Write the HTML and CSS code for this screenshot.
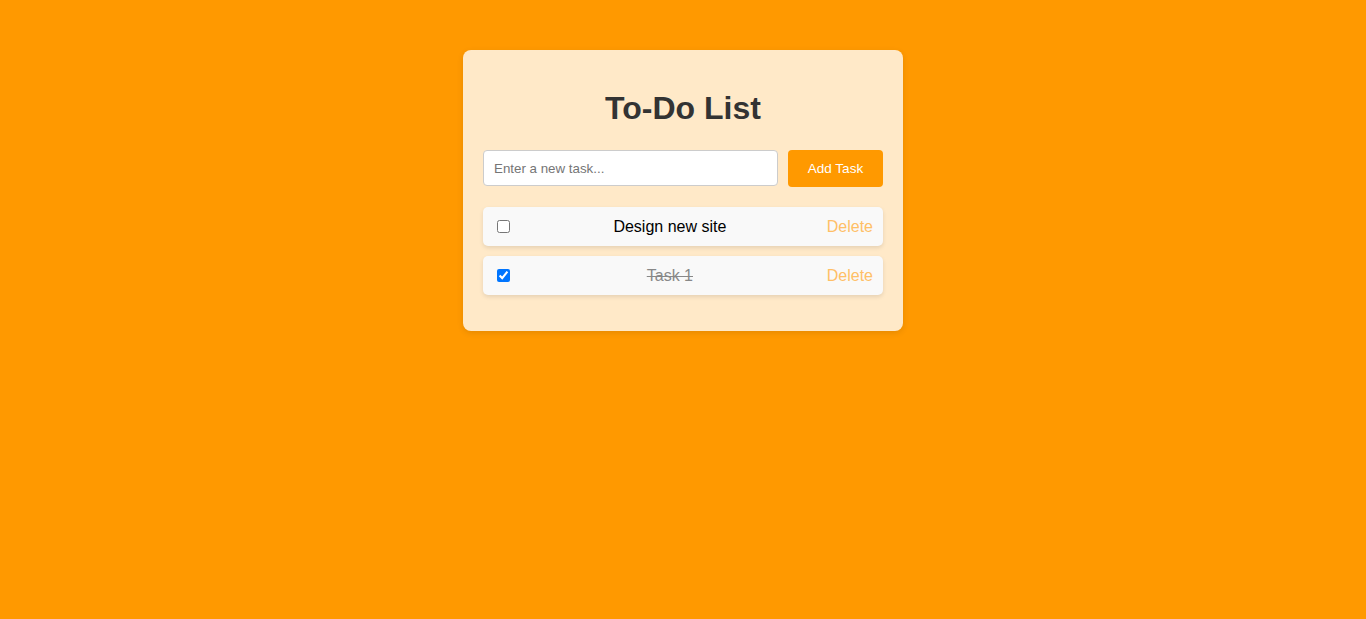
FILE: index.html
```html
<!DOCTYPE html>
<html lang="en">
<head>
<meta charset="UTF-8">
<title>To-Do List</title>
<link rel="stylesheet" href="styles.css">
</head>
<body>
  <div class="container">
    <h1 class="title">To-Do List</h1>
    <div class="input-row">
      <input class="task-input" type="text" placeholder="Enter a new task...">
      <button class="add-btn">Add Task</button>
    </div>
    <ul class="task-list">
      <li class="task">
        <input type="checkbox" class="task-check">
        <span class="task-text">Design new site</span>
        <button class="delete-btn">Delete</button>
      </li>
      <li class="task done">
        <input type="checkbox" class="task-check" checked>
        <span class="task-text">Task 1</span>
        <button class="delete-btn">Delete</button>
      </li>
    </ul>
  </div>
</body>
</html>
```
FILE: styles.css
```css
html, body {
  margin: 0;
  padding: 0;
}
body {
  background: #ff9900;
  font-family: Arial, "Liberation Sans", sans-serif;
  min-height: 100vh;
  display: flex;
  justify-content: center;
  align-items: flex-start;
}
.container {
  width: 400px;
  margin-top: 50px;
  padding: 20px;
  background: #ffe9c8;
  border-radius: 8px;
  box-shadow: 0 2px 6px rgba(0, 0, 0, 0.1);
}
.title {
  text-align: center;
  color: #333;
  font-size: 32px;
  margin: 20px 0 23px;
}
.input-row {
  display: flex;
  gap: 10px;
  margin-bottom: 20px;
}
.task-input {
  flex: 1;
  height: 36px;
  box-sizing: border-box;
  padding: 8px 10px;
  border: 1px solid #ccc;
  border-radius: 4px;
  font-family: Arial, "Liberation Sans", sans-serif;
  font-size: 13.333px;
  background: #fff;
}
.task-input::placeholder {
  color: #757575;
}
.add-btn {
  width: 95px;
  height: 37px;
  border: none;
  border-radius: 4px;
  background: #ff9900;
  color: #fff;
  font-family: Arial, "Liberation Sans", sans-serif;
  font-size: 13.5px;
  font-weight: normal;
  padding: 0;
}
.task-list {
  list-style: none;
  margin: 0;
  padding: 0 0 6px;
}
.task {
  display: flex;
  align-items: center;
  background: #f9f9f9;
  padding: 10px;
  line-height: 19px;
  margin-bottom: 10px;
  border-radius: 5px;
  box-shadow: 0 2px 4px rgba(0, 0, 0, 0.1);
}
.task-check {
  margin: 3px 3px 3px 4px;
}
.task-text {
  flex: 1;
  text-align: center;
  font-size: 16px;
  color: #000;
}
.done .task-text {
  text-decoration: line-through;
  color: #888;
}
.delete-btn {
  background: none;
  border: none;
  padding: 0;
  font-family: Arial, "Liberation Sans", sans-serif;
  font-size: 16px;
  line-height: 19px;
  color: #ffbf66;
}
```
